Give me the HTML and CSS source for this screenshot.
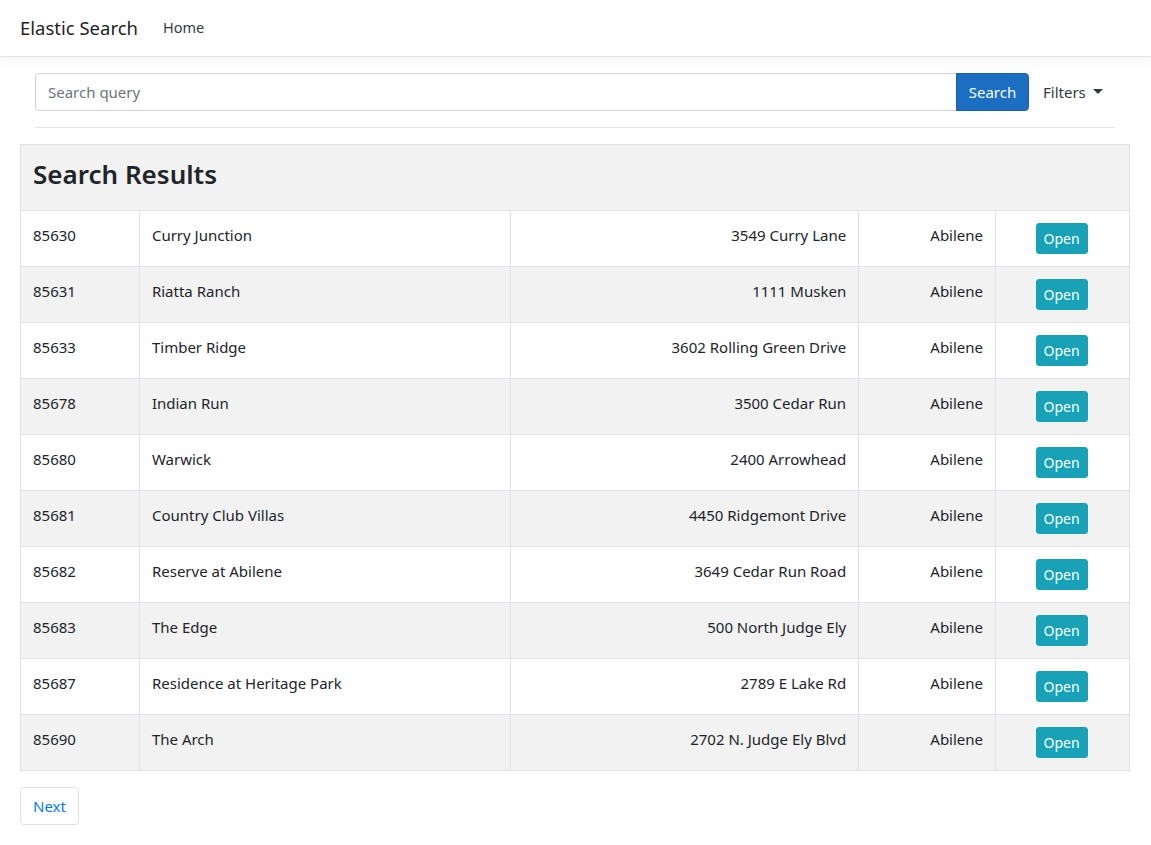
FILE: index.html
```html
<!DOCTYPE html>
<html lang="en">
<head>
<meta charset="utf-8">
<title>Elastic Search</title>
<link rel="stylesheet" href="styles.css">
</head>
<body>
<header class="navbar">
  <a class="brand" href="#">Elastic Search</a>
  <a class="nav-link" href="#">Home</a>
</header>
<main class="main">
  <div class="search-row">
    <div class="input-group">
      <input class="search-input" type="text" placeholder="Search query">
      <button class="btn-primary" type="button">Search</button>
    </div>
    <a class="filters" href="#">Filters <span class="caret"></span></a>
  </div>
  <hr class="divider">
  <table class="results">
    <colgroup>
      <col class="c1"><col class="c2"><col class="c3"><col class="c4"><col class="c5">
    </colgroup>
    <thead>
      <tr><th colspan="5"><h3 class="title">Search Results</h3></th></tr>
    </thead>
    <tbody>
      <tr><td>85630</td><td>Curry Junction</td><td class="r">3549 Curry Lane</td><td class="r">Abilene</td><td class="ctr"><button class="btn-info">Open</button></td></tr>
      <tr><td>85631</td><td>Riatta Ranch</td><td class="r">1111 Musken</td><td class="r">Abilene</td><td class="ctr"><button class="btn-info">Open</button></td></tr>
      <tr><td>85633</td><td>Timber Ridge</td><td class="r">3602 Rolling Green Drive</td><td class="r">Abilene</td><td class="ctr"><button class="btn-info">Open</button></td></tr>
      <tr><td>85678</td><td>Indian Run</td><td class="r">3500 Cedar Run</td><td class="r">Abilene</td><td class="ctr"><button class="btn-info">Open</button></td></tr>
      <tr><td>85680</td><td>Warwick</td><td class="r">2400 Arrowhead</td><td class="r">Abilene</td><td class="ctr"><button class="btn-info">Open</button></td></tr>
      <tr><td>85681</td><td>Country Club Villas</td><td class="r">4450 Ridgemont Drive</td><td class="r">Abilene</td><td class="ctr"><button class="btn-info">Open</button></td></tr>
      <tr><td>85682</td><td>Reserve at Abilene</td><td class="r">3649 Cedar Run Road</td><td class="r">Abilene</td><td class="ctr"><button class="btn-info">Open</button></td></tr>
      <tr><td>85683</td><td>The Edge</td><td class="r">500 North Judge Ely</td><td class="r">Abilene</td><td class="ctr"><button class="btn-info">Open</button></td></tr>
      <tr><td>85687</td><td>Residence at Heritage Park</td><td class="r">2789 E Lake Rd</td><td class="r">Abilene</td><td class="ctr"><button class="btn-info">Open</button></td></tr>
      <tr><td>85690</td><td>The Arch</td><td class="r">2702 N. Judge Ely Blvd</td><td class="r">Abilene</td><td class="ctr"><button class="btn-info">Open</button></td></tr>
    </tbody>
  </table>
  <nav class="pager"><a class="page-link" href="#">Next</a></nav>
</main>
</body>
</html>
```
FILE: styles.css
```css
* { box-sizing: border-box; }
html, body { margin: 0; }
body {
  font-family: "Noto Sans", "Open Sans", sans-serif;
  font-size: 15px;
  line-height: 1.5;
  color: #212529;
  background: #fff;
}
a { text-decoration: none; }

.navbar {
  height: 57px;
  display: flex;
  align-items: center;
  padding: 0 20px;
  border-bottom: 1px solid #e5e5e5;
  box-shadow: 0 4px 12px rgba(0,0,0,.05);
  background: #fff;
}
.brand {
  font-size: 18.5px;
  color: rgba(0,0,0,.9);
  margin-right: 25px;
  padding-bottom: 1px;
}
.nav-link {
  font-size: 14.5px;
  color: #343a40;
}

.main {
  padding: 16px 21px 0 20px;
}
.search-row {
  display: flex;
  align-items: center;
  padding: 0 15px;
}
.input-group {
  display: flex;
  flex: 0 0 994px;
  height: 38px;
}
.search-input {
  flex: 1;
  height: 38px;
  border: 1px solid #ced4da;
  border-right: 0;
  border-radius: 4px 0 0 4px;
  padding: 6px 12px;
  font: inherit;
  font-size: 15px;
  color: #495057;
  outline: none;
}
.search-input::placeholder { color: #6c757d; }
.btn-primary {
  width: 73px;
  height: 38px;
  background: #1b6ec2;
  border: 1px solid #1861ac;
  border-radius: 0 4px 4px 0;
  color: #fff;
  font: inherit;
  font-size: 15px;
  padding: 0;
}
.filters {
  margin-left: 14px;
  color: #343a40;
  font-size: 15px;
  display: flex;
  align-items: center;
  gap: 7px;
}
.caret {
  display: inline-block;
  width: 0; height: 0;
  border-left: 5px solid transparent;
  border-right: 5px solid transparent;
  border-top: 5px solid #343a40;
  margin-top: -2px;
}
.divider {
  margin: 16px 15px;
  border: 0;
  border-top: 1px solid #e3e3e3;
}

.results {
  width: 1110px;
  border-collapse: collapse;
  border: 1px solid #dee2e6;
}
.c1 { width: 119px; }
.c2 { width: 371px; }
.c3 { width: 349px; }
.c4 { width: 137px; }
.c5 { width: 134px; }
.results th {
  text-align: left;
  padding: 14px 12px 12px;
  background: #f2f2f2;
  border: 1px solid #dee2e6;
}
.title {
  margin: 0 0 8px;
  font-size: 26px;
  font-weight: 600;
  line-height: 1.2;
  color: #212529;
}
.results td {
  padding: 12px;
  height: 56px;
  vertical-align: top;
  border: 1px solid #dee2e6;
  line-height: 24px;
}
.results tbody tr:nth-child(even) td { background: #f2f2f2; }
.results td.r { text-align: right; }
.results td.ctr { text-align: center; padding: 12px 13px 11px 11px; }
.btn-info {
  background: #17a2b8;
  border: 1px solid #17a2b8;
  color: #fff;
  border-radius: 3px;
  font: inherit;
  font-size: 14px;
  height: 31px;
  width: 52px;
  padding: 0;
  line-height: 1.5;
  vertical-align: top;
}

.pager {
  margin-top: 16px;
  display: flex;
}
.page-link {
  display: block;
  height: 38px;
  width: 59px;
  border: 1px solid #dee2e6;
  border-radius: 4px;
  color: #007bff;
  font-size: 15px;
  text-align: center;
  line-height: 36px;
}
```
